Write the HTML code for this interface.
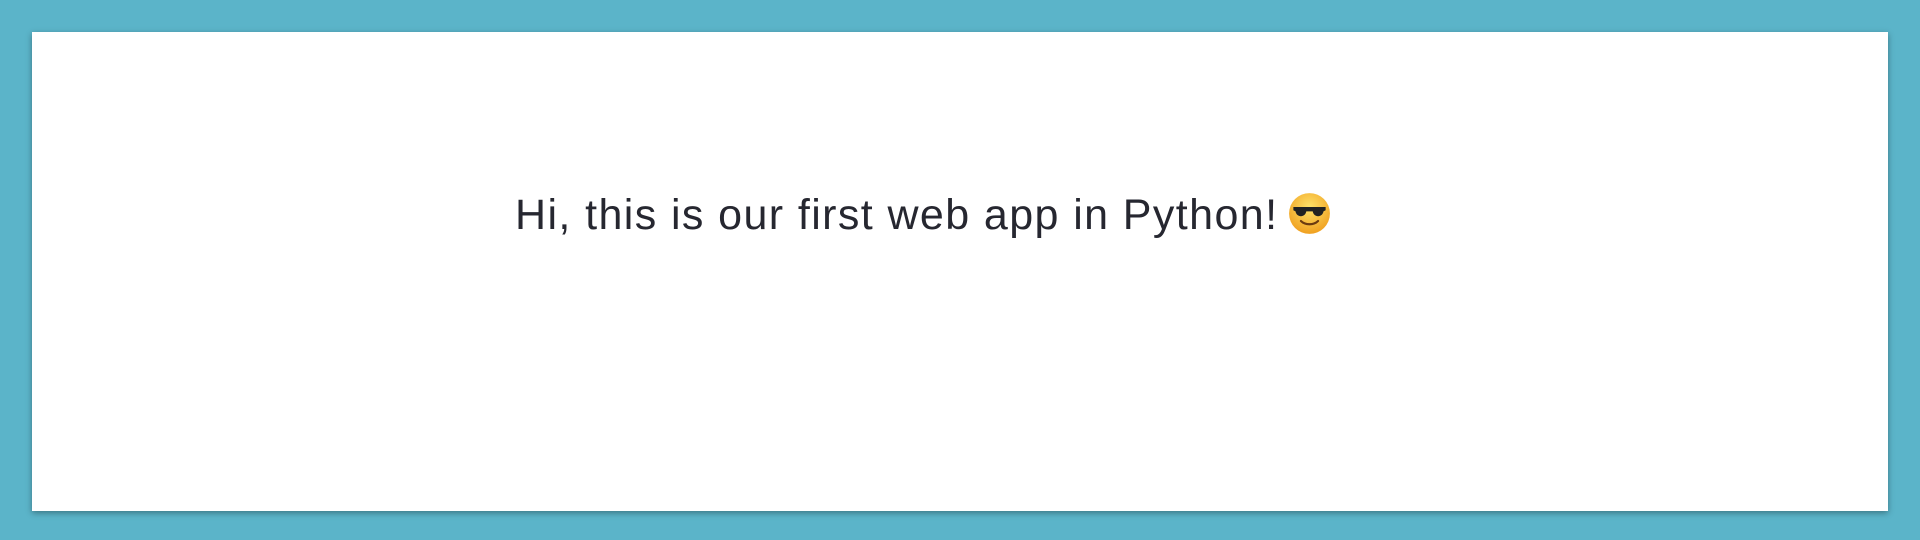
<!DOCTYPE html>
<html><head><meta charset="utf-8"><style>
html,body{margin:0;padding:0}
body{width:1920px;height:540px;background:#5bb4c9;position:relative;overflow:hidden}
.box{position:absolute;left:32px;top:32px;width:1856px;height:479px;background:#fff;box-shadow:0 2px 6px rgba(0,0,0,.35)}
.t{position:absolute;left:515px;top:190px;font-family:"Liberation Sans","DejaVu Sans",sans-serif;font-size:43px;letter-spacing:1.4px;color:#262730;white-space:nowrap;line-height:50px}
.e{display:inline-block;width:43px;height:43px;vertical-align:-6px;margin-left:10px}
</style></head><body>
<div class="box"></div>
<div class="t">Hi, this is our first web app in Python!<svg class="e" viewBox="0 0 40 40"><defs><radialGradient id="g" cx="50%" cy="35%" r="65%"><stop offset="0" stop-color="#ffe36a"/><stop offset="1" stop-color="#f0a020"/></radialGradient></defs><circle cx="20" cy="20" r="19" fill="url(#g)"/><path d="M5 14h30v3l-2 1c-1 6-9 6-10 0h-6c-1 6-9 6-10 0l-2-1z" fill="#222"/><path d="M12 27c4 4 12 4 16 0" stroke="#6b3a10" stroke-width="2" fill="none" stroke-linecap="round"/></svg></div>
</body></html>
